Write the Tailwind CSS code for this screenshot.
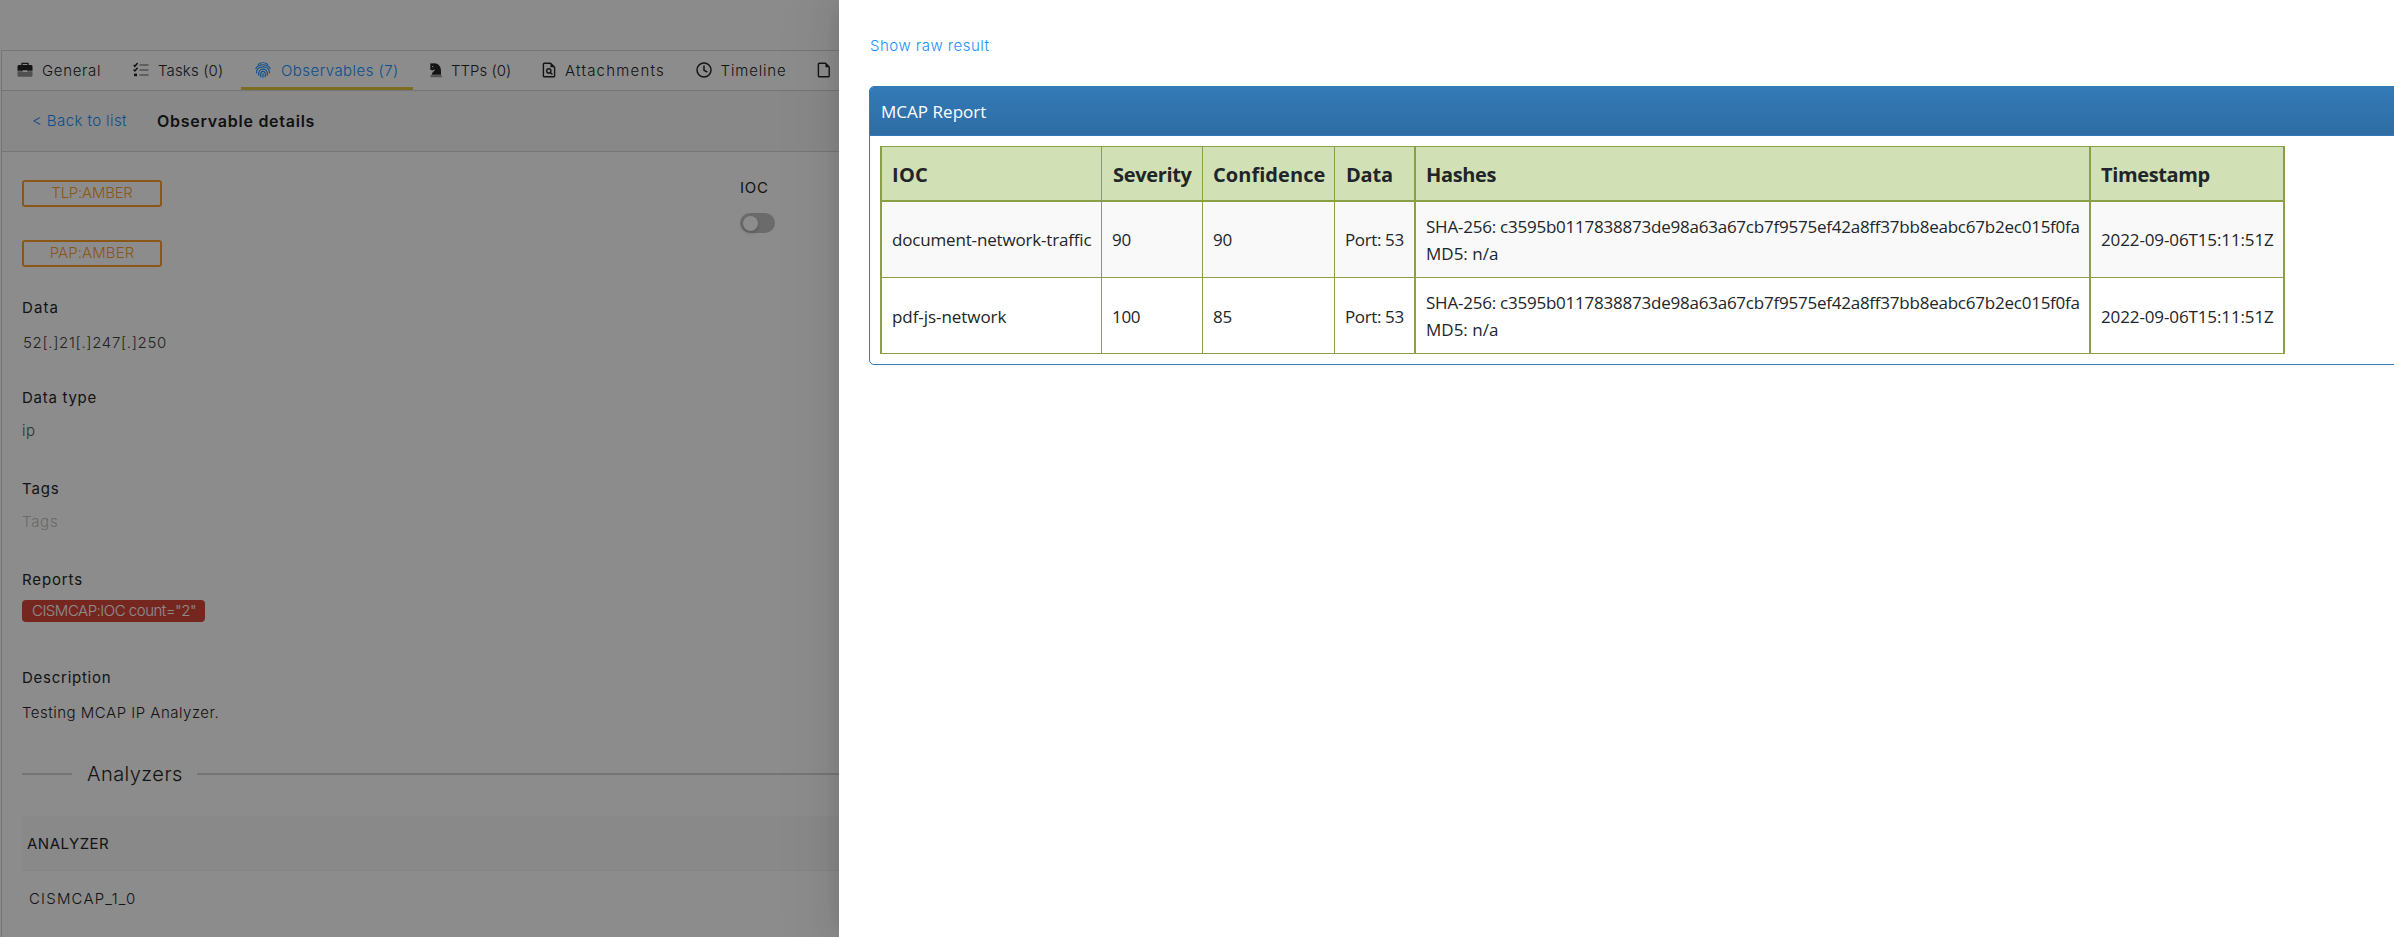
<!DOCTYPE html>
<html lang="en">
<head>
<meta charset="utf-8">
<title>Observable details</title>
<script src="https://cdn.jsdelivr.net/npm/@tailwindcss/browser@4"></script>
</head>
<body class="relative flex h-[937px] w-[2394px] overflow-hidden bg-white">

<!-- Case page behind the drawer -->
<main class="relative h-full w-[839px] shrink-0 overflow-hidden bg-white font-['Inter',sans-serif] text-[15px] font-light text-[#262626]">
  <div class="h-[50px] bg-[#fdfdfd]"></div>
  <div class="ml-px h-[887px] border-t border-l border-[#d6d6d6]">
    <nav class="flex h-10 w-[900px] border-b border-[#d6d6d6] pl-px">
      <a class="flex h-[39px] w-[116px] shrink-0 items-center gap-[9px] pl-3.5 whitespace-nowrap">
        <svg class="mb-[2px] size-4 shrink-0" viewBox="0 0 16 16"><path d="M5 3V1.3h6V3" fill="none" stroke="#262626" stroke-width="1.3"/><path d="M1.5 3h13l1 1v4.7h-5.3V8.2H5.8v.5H.5V4z" fill="#262626"/><path d="M.5 9.2h5.3v.8h4.4v-.8h5.3V14l-.7.7H1.2L.5 14z" fill="#262626" opacity=".5"/></svg>
        <span class="pt-px tracking-[0.67px]">General</span>
      </a>
      <a class="flex h-[39px] w-[122px] shrink-0 items-center gap-[9px] pl-3.5 whitespace-nowrap">
        <svg class="mb-[2px] size-4 shrink-0" viewBox="0 0 16 16" fill="none"><path d="M.7 3l1.2 1.3L4.6 1M.7 7.6l1.2 1.3 2.7-3.2" stroke="#262626" stroke-width="1.5"/><path d="M1 12.9h3" stroke="#262626" stroke-width="2.6"/><path d="M6.5 3h9M6.5 8h9M6.5 13h9" stroke="#262626" stroke-width="1.7" opacity=".5"/></svg>
        <span class="pt-px tracking-[0.15px]">Tasks (0)</span>
      </a>
      <a class="mr-px flex h-[39px] w-[172px] shrink-0 items-center gap-[10px] border-b-3 border-[#e4c83a] pt-[3px] pl-3.5 whitespace-nowrap text-[#1890ff]">
        <svg class="mb-[2px] size-4 shrink-0" viewBox="0 0 16 16" fill="none" stroke="#1890ff" stroke-width="1.15" stroke-linecap="round"><path d="M3.200 2.400C6 .2 10 .2 12.800 2.400"/><path d="M.8 6.500C2.300 3.900 4.800 2.700 8 2.700s5.700 1.200 7.200 3.800"/><path d="M1.500 10.800C1.300 7 4 4.900 8 4.900s6.700 2.100 6.500 5.900"/><path d="M3.700 13.200C3.300 9.500 4.800 7.100 8 7.100s4.700 2.400 4.300 6.100"/><path d="M5.800 14.800c-.4-3.400 0-5.500 2.200-5.500s2.600 2.100 2.200 5.500M8 11.500v3.700"/></svg>
        <span class="pt-px tracking-[0.45px]">Observables (7)</span>
      </a>
      <a class="flex h-[39px] w-[113px] shrink-0 items-center gap-[7px] pl-3.5 whitespace-nowrap">
        <svg class="mb-[2px] size-4 shrink-0" viewBox="0 0 16 16"><path d="M2.300 1.200 4 1.400C9.500.2 13 3.500 13 9v3.800H3.700c0-2.700 2.900-3.300 3.200-5.600L4.300 8.600 2.300 7.700V5z" fill="#262626"/><circle cx="4.700" cy="4.600" r=".7" fill="#fff"/><path d="M2.500 13.200h11.200v2H2.500z" fill="#262626" opacity=".5"/></svg>
        <span class="pt-px tracking-[0.01px]">TTPs (0)</span>
      </a>
      <a class="flex h-[39px] w-[154.500px] shrink-0 items-center gap-[8px] pl-3.5 whitespace-nowrap">
        <svg class="mb-[2px] size-4 shrink-0" viewBox="0 0 16 16" fill="none" stroke="#262626" stroke-width="1.400"><path d="M9.500 1.200H3.300a.9.900 0 0 0-.9.900v11.800c0 .5.400.9.900.9h9.400c.5 0 .9-.4.900-.9V5.200z"/><path d="M9.500 1v4.300h4.300z" fill="#262626" stroke="none"/><circle cx="7.800" cy="8.900" r="2.100"/><path d="M9.300 10.400l2.100 2.100"/></svg>
        <span class="pt-px tracking-[1.200px]">Attachments</span>
      </a>
      <a class="flex h-[39px] w-[120.500px] shrink-0 items-center gap-[9px] pl-3.5 whitespace-nowrap">
        <svg class="mb-[2px] size-4 shrink-0" viewBox="0 0 16 16" fill="none" stroke="#262626" stroke-width="1.500"><circle cx="8" cy="8" r="7"/><path d="M8 3.600v4.700l3.300 1.700"/></svg>
        <span class="pt-px tracking-[0.840px]">Timeline</span>
      </a>
      <a class="flex h-[39px] w-10 shrink-0 items-center pl-3.5">
        <svg class="mb-[2px] size-4 shrink-0" viewBox="0 0 16 16" fill="none" stroke="#262626" stroke-width="1.400"><path d="M9.500 1.200H3.300a.9.900 0 0 0-.9.900v11.800c0 .5.400.9.900.9h9c.5 0 .9-.4.900-.9V5z"/><path d="M9.500 1v4.200h4z" fill="#262626" stroke="none"/></svg>
      </a>
    </nav>
    <header class="flex h-[61px] items-center border-b border-[#d6d6d6] bg-[#f7f7f7] pl-[30px] whitespace-nowrap">
      <a class="w-[125px] tracking-[0.410px] text-[#1890ff]">&lt; Back to list</a>
      <h1 class="text-base font-semibold tracking-[0.740px] text-[#1f1f1f]">Observable details</h1>
    </header>

    <section class="flex h-[786px] bg-white pl-5">
      <div class="w-[718px] shrink-0 pt-7">
        <div class="flex h-[27px] w-[140px] items-center justify-center rounded-[3px] border-2 border-[#fd9f28] tracking-[-0.240px] text-[#fd9f28]">TLP:AMBER</div>
        <div class="mt-[33px] flex h-[27px] w-[140px] items-center justify-center rounded-[3px] border-2 border-[#fd9f28] tracking-[0.080px] text-[#fd9f28]">PAP:AMBER</div>
        <h2 class="mt-[29px] h-[23px] leading-[23px] font-normal tracking-[1.100px]">Data</h2>
        <p class="mt-3 h-[23px] pl-px leading-[23px] tracking-[0.660px] text-[#404040]">52[.]21[.]247[.]250</p>
        <h2 class="mt-8 h-[23px] leading-[23px] font-normal tracking-[0.720px]">Data type</h2>
        <p class="mt-2.5 h-[23px] leading-[23px] tracking-[0.500px] text-[#595959]">ip</p>
        <h2 class="mt-[35px] h-[23px] leading-[23px] font-normal tracking-[0.860px]">Tags</h2>
        <p class="mt-2.5 h-[23px] leading-[24px] tracking-[0.720px] text-[#bfbfbf]">Tags</p>
        <h2 class="mt-[35px] h-[22px] leading-[23px] font-normal tracking-[0.860px]">Reports</h2>
        <div class="mt-2.5 h-[22px] w-[183px] rounded-[4px] bg-[#d5473a] pl-[10px] leading-[21px] tracking-[-0.490px] whitespace-nowrap text-white">CISMCAP:IOC count="2"</div>
        <h2 class="mt-11 h-[22px] leading-[23px] font-normal tracking-[0.740px]">Description</h2>
        <p class="mt-[13px] h-[22px] leading-[23px] tracking-[0.500px]">Testing MCAP IP Analyzer.</p>
        <div class="mt-9 flex h-[30px] w-[900px] items-center">
          <span class="h-[2px] w-[50px] bg-[#d6d6d6]"></span>
          <span class="w-[125px] pl-[15px] text-xl leading-7 tracking-[0.450px]">Analyzers</span>
          <span class="h-[2px] flex-1 bg-[#d6d6d6]"></span>
        </div>
        <div class="mt-[27px] h-[55px] w-[900px] border-b border-[#f0f0f0] bg-[#fafafa] pl-[5px] leading-[55px] font-normal tracking-[0.500px]">ANALYZER</div>
        <div class="h-[54px] w-[900px] pl-[7px] leading-[55px] tracking-[1.190px]">CISMCAP_1_0</div>
      </div>
      <div class="pt-6">
        <h2 class="h-[22px] leading-[23px] font-normal tracking-[0.710px]">IOC</h2>
        <div class="mt-[15px] h-5 w-[35px] rounded-full bg-[#c4c4c4] p-[2.500px]"><div class="size-[15px] rounded-full bg-white shadow-[0_2px_4px_rgba(0,0,0,0.2)]"></div></div>
      </div>
    </section>
  </div>
  <!-- Dimming mask -->
  <div class="absolute inset-0 bg-black/45"></div>
</main>

<!-- Report drawer -->
<aside class="relative z-10 h-full flex-1 overflow-hidden bg-white pt-[35px] pl-[30px] shadow-[-6px_0_16px_-8px_rgba(0,0,0,0.08),-9px_0_28px_0_rgba(0,0,0,0.05),-12px_0_48px_16px_rgba(0,0,0,0.03)]">
  <a class="block h-[51px] pl-px font-['Inter',sans-serif] text-[15px] leading-[22px] font-light tracking-[0.490px] text-[#1890ff]">Show raw result</a>
  <div class="h-[279px] w-[1600px] rounded-[5px] border border-[#337ab7] font-['Open_Sans',sans-serif] text-[17px] leading-[27px] text-[#212529]">
    <div class="h-[49px] rounded-t-[4px] border-b border-[#337ab7] bg-linear-to-b from-[#337ab7] to-[#2e6da4] pl-[11px] leading-[49px] tracking-[0.030px] text-white">MCAP Report</div>
    <table class="mt-[10px] ml-[10px] w-[1405px] table-fixed border-separate border-spacing-0 border-t border-l-2 border-[#8b9f44] whitespace-nowrap">
      <colgroup>
        <col class="w-[220px]"><col class="w-[101px]"><col class="w-[132px]"><col class="w-[81px]"><col class="w-[675px]"><col class="w-[194px]">
      </colgroup>
      <thead>
        <tr class="h-[55px] bg-[#d2e1b5] text-left text-xl">
          <th class="border-r border-b-2 border-[#8b9f44] p-0 pt-[2px] pl-[10px] font-bold tracking-[0.270px]">IOC</th>
          <th class="border-r border-b-2 border-[#8b9f44] p-0 pt-[2px] pl-[11px] font-bold tracking-[-0.330px]">Severity</th>
          <th class="border-r border-b-2 border-[#8b9f44] p-0 pt-[2px] pl-[10px] font-bold tracking-[0.050px]">Confidence</th>
          <th class="border-r-2 border-b-2 border-[#8b9f44] p-0 pt-[2px] pl-[11px] font-bold tracking-[-0.180px]">Data</th>
          <th class="border-r-2 border-b-2 border-[#8b9f44] p-0 pt-[2px] pl-[10px] font-bold tracking-[-0.370px]">Hashes</th>
          <th class="border-r-2 border-b-2 border-[#8b9f44] p-0 pt-[2px] pl-[10px] font-bold tracking-[-0.360px]">Timestamp</th>
        </tr>
      </thead>
      <tbody>
        <tr class="h-[76px] bg-[#f9f9f9]">
          <td class="border-r border-b border-[#8b9f44] p-0 pl-[10px] tracking-[-0.170px]">document-network-traffic</td>
          <td class="border-r border-b border-[#8b9f44] p-0 pl-[10px] tracking-[-0.300px]">90</td>
          <td class="border-r border-b border-[#8b9f44] p-0 pl-[10px] tracking-[-0.300px]">90</td>
          <td class="border-r-2 border-b border-[#8b9f44] p-0 pl-[10px] tracking-[-0.370px]">Port: 53</td>
          <td class="border-r-2 border-b border-[#8b9f44] p-0 pl-[10px]"><div class="tracking-[-0.230px]">SHA-256: c3595b0117838873de98a63a67cb7f9575ef42a8ff37bb8eabc67b2ec015f0fa</div><div>MD5: n/a</div></td>
          <td class="border-r-2 border-b border-[#8b9f44] p-0 pl-[10px] tracking-[-0.120px]">2022-09-06T15:11:51Z</td>
        </tr>
        <tr class="h-[76px]">
          <td class="border-r border-b border-[#8b9f44] p-0 pt-[2px] pl-[10px] tracking-[-0.060px]">pdf-js-network</td>
          <td class="border-r border-b border-[#8b9f44] p-0 pt-[2px] pl-[10px] tracking-[-0.300px]">100</td>
          <td class="border-r border-b border-[#8b9f44] p-0 pt-[2px] pl-[10px] tracking-[-0.300px]">85</td>
          <td class="border-r-2 border-b border-[#8b9f44] p-0 pt-[2px] pl-[10px] tracking-[-0.370px]">Port: 53</td>
          <td class="border-r-2 border-b border-[#8b9f44] p-0 pl-[10px]"><div class="tracking-[-0.230px]">SHA-256: c3595b0117838873de98a63a67cb7f9575ef42a8ff37bb8eabc67b2ec015f0fa</div><div>MD5: n/a</div></td>
          <td class="border-r-2 border-b border-[#8b9f44] p-0 pt-[2px] pl-[10px] tracking-[-0.120px]">2022-09-06T15:11:51Z</td>
        </tr>
      </tbody>
    </table>
  </div>
</aside>
</body>
</html>
